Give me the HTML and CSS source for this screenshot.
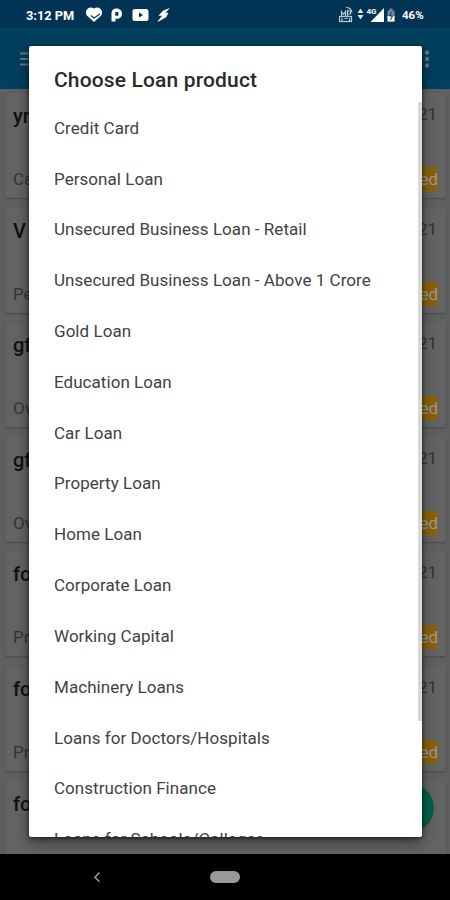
FILE: index.html
```html
<!DOCTYPE html>
<html lang="en">
<head>
<meta charset="utf-8">
<title>Choose Loan product</title>
<link rel="stylesheet" href="styles.css">
</head>
<body>
<div class="phone">
  <header class="status">
    <span class="time">3:12 PM</span>
    <svg class="notifs" width="86" height="18" viewBox="0 0 86 18" fill="#fff">
      <path d="M9 16 1.800 9.500C-1 4.500 4-.5 9 2.500 14-.5 19 4.500 16.200 9.500Z"/>
      <path d="M6 9.500l3 2.500 6-4" fill="none" stroke="#003354" stroke-width="1.100"/>
      <path fill-rule="evenodd" d="M26.500 15.500V7.500C26.500 .5 37 1.500 37 7.500c0 4.500-3.500 6-6.500 5v3ZM30.300 6v3.800h3V6Z"/>
      <path fill-rule="evenodd" d="M50 3h11q2.500 0 2.500 2.500v7q0 2.500-2.500 2.500H50q-2.500 0-2.500-2.500v-7Q47.500 3 50 3Zm4 3.500v5l4-2.500Z"/>
      <path d="M84 2.500 78 5 74 9.500h3.500L73 15.500l8-4.500 2-4h-3Z" stroke="#fff" stroke-width=".6"/>
    </svg>
    <svg class="signals" width="62" height="20" viewBox="0 0 62 20">
      <g fill="none" stroke="#bac9d2" stroke-width="1.200"><path d="M4.500 11V6.500l2 3 2-3V11M10.500 11V5M10.500 6h3v3h-3M9 2.500q5 0 6 5"/><rect x="2.500" y="11.500" width="12" height="5"/><path d="M5 13v3M7.500 13.500h3M12.500 13v3"/></g>
      <path d="M23.500 3.500l3 4.500h-6ZM20.500 10h6l-3 4.500Z" fill="#dce5ea"/>
      <text x="29.500" y="9" class="network">4G</text>
      <path d="M47 3v14H33.500Z" fill="#fff"/>
      <path d="M50.500 5.500h2v-2h3v2h2v11h-7Z" fill="#71899b"/><path d="M50.500 11h7v5.500h-7Z" fill="#fff"/><path d="M54.500 7l-2 4h3l-2 4" stroke="#003354" fill="none"/>
    </svg>
    <span class="percent">46%</span>
  </header>
  <div class="appbar">
    <svg width="20" height="16" viewBox="0 0 20 16"><path d="M0 2.500h20M0 8h20M0 13.500h20" stroke="#68727a" stroke-width="2"/></svg>
    <svg width="6" height="18" viewBox="0 0 6 18" fill="#68727a"><circle cx="3" cy="2.500" r="2.200"/><circle cx="3" cy="9" r="2.200"/><circle cx="3" cy="15.500" r="2.200"/></svg>
  </div>
  <main class="cards">
    <article class="card"><b>yr</b><span class="date">21</span><span class="type">Ca</span><span class="badge">ed</span></article>
    <article class="card"><b>V</b><span class="date">21</span><span class="type">Pe</span><span class="badge">ed</span></article>
    <article class="card"><b>gf</b><span class="date">21</span><span class="type">Ov</span><span class="badge">ed</span></article>
    <article class="card"><b>gf</b><span class="date">21</span><span class="type">Ov</span><span class="badge">ed</span></article>
    <article class="card"><b>fo</b><span class="date">21</span><span class="type">Pr</span><span class="badge">ed</span></article>
    <article class="card"><b>fo</b><span class="date">21</span><span class="type">Pr</span><span class="badge">ed</span></article>
    <article class="card"><b>fo</b></article>
  </main>
  <nav class="navbar">
    <svg class="back" width="10" height="14" viewBox="0 0 10 14"><path d="M7.500 2.500 3 7.200l4.500 4.600" fill="none" stroke="#999" stroke-width="1.600"/></svg>
    <span class="home"></span>
  </nav>
  <div class="fab"></div>
  <section class="dialog">
    <h1>Choose Loan product</h1>
    <ul>
      <li>Credit Card</li>
      <li>Personal Loan</li>
      <li>Unsecured Business Loan - Retail</li>
      <li>Unsecured Business Loan - Above 1 Crore</li>
      <li>Gold Loan</li>
      <li>Education Loan</li>
      <li>Car Loan</li>
      <li>Property Loan</li>
      <li>Home Loan</li>
      <li>Corporate Loan</li>
      <li>Working Capital</li>
      <li>Machinery Loans</li>
      <li>Loans for Doctors/Hospitals</li>
      <li>Construction Finance</li>
      <li>Loans for Schools/Colleges</li>
    </ul>
    <div class="scroll"></div>
  </section>
</div>
</body>
</html>
```
FILE: styles.css
```css
* { box-sizing: border-box; }
body { margin: 0; font-family: Roboto, sans-serif; }
.phone { position: relative; width: 450px; height: 900px; overflow: hidden; display: flex; flex-direction: column; background: #606060; }
.status { height: 28px; flex: none; display: flex; align-items: center; padding: 2px 25px 0 26px; background: #003354; color: #fff; font-weight: 700; }
.time { font-size: 12.8px; width: 59px; white-space: nowrap; }
.signals { margin-left: auto; }
.network { font-size: 8px; font-weight: 700; fill: #fff; }
.percent { font-size: 11.5px; width: 23px; margin-left: 3px; white-space: nowrap; }
.appbar { height: 61px; flex: none; display: flex; justify-content: space-between; align-items: center; padding: 0 20px; background: #003f5e; }
.cards { flex: 1; min-height: 0; overflow: hidden; padding: 4px 4px 0 5px; }
.card { height: 105px; margin-bottom: 9.6px; padding: 8px 8px 7px 8px; display: grid; grid-template-columns: auto auto; justify-content: space-between; align-content: space-between; background: #636363; border-radius: 3px; box-shadow: 0 1px 2px #484848; color: #353535; }
.card b { font-size: 20px; font-weight: 500; line-height: 30px; color: #101010; }
.card span { justify-self: end; font-size: 17px; line-height: 24px; }
.card .date { line-height: 26px; margin-right: 1px; }
.card .type { justify-self: start; align-self: end; }
.card .badge { background: #89600b; color: #999; }
.navbar { height: 46px; flex: none; display: grid; grid-template-columns: 1fr 30px 1fr; align-items: center; background: #000; }
.back { margin-left: 92px; }
.home { height: 12px; border-radius: 6px; background: #999; }
.fab { position: absolute; left: 386px; top: 784px; width: 48px; height: 48px; border-radius: 50%; background: #006049; }
.dialog { position: absolute; left: 29px; top: 46px; width: 393px; height: 791px; overflow: hidden; background: #fff; border-radius: 2px; box-shadow: 0 6px 14px #0006, 0 1px 4px #0009; }
.dialog h1 { margin: 0; height: 56.8px; padding: 18px 25px 0; font-size: 21px; line-height: 32px; font-weight: 500; letter-spacing: .15px; color: #2a2a2a; }
.dialog ul { margin: 0; padding: 0 25px; list-style: none; }
.dialog li { height: 50.82px; line-height: 50.82px; font-size: 17px; letter-spacing: .05px; color: #424242; white-space: nowrap; }
.scroll { position: absolute; right: 0; top: 56px; width: 4px; height: 619px; background: #d8d8d8; }
```
